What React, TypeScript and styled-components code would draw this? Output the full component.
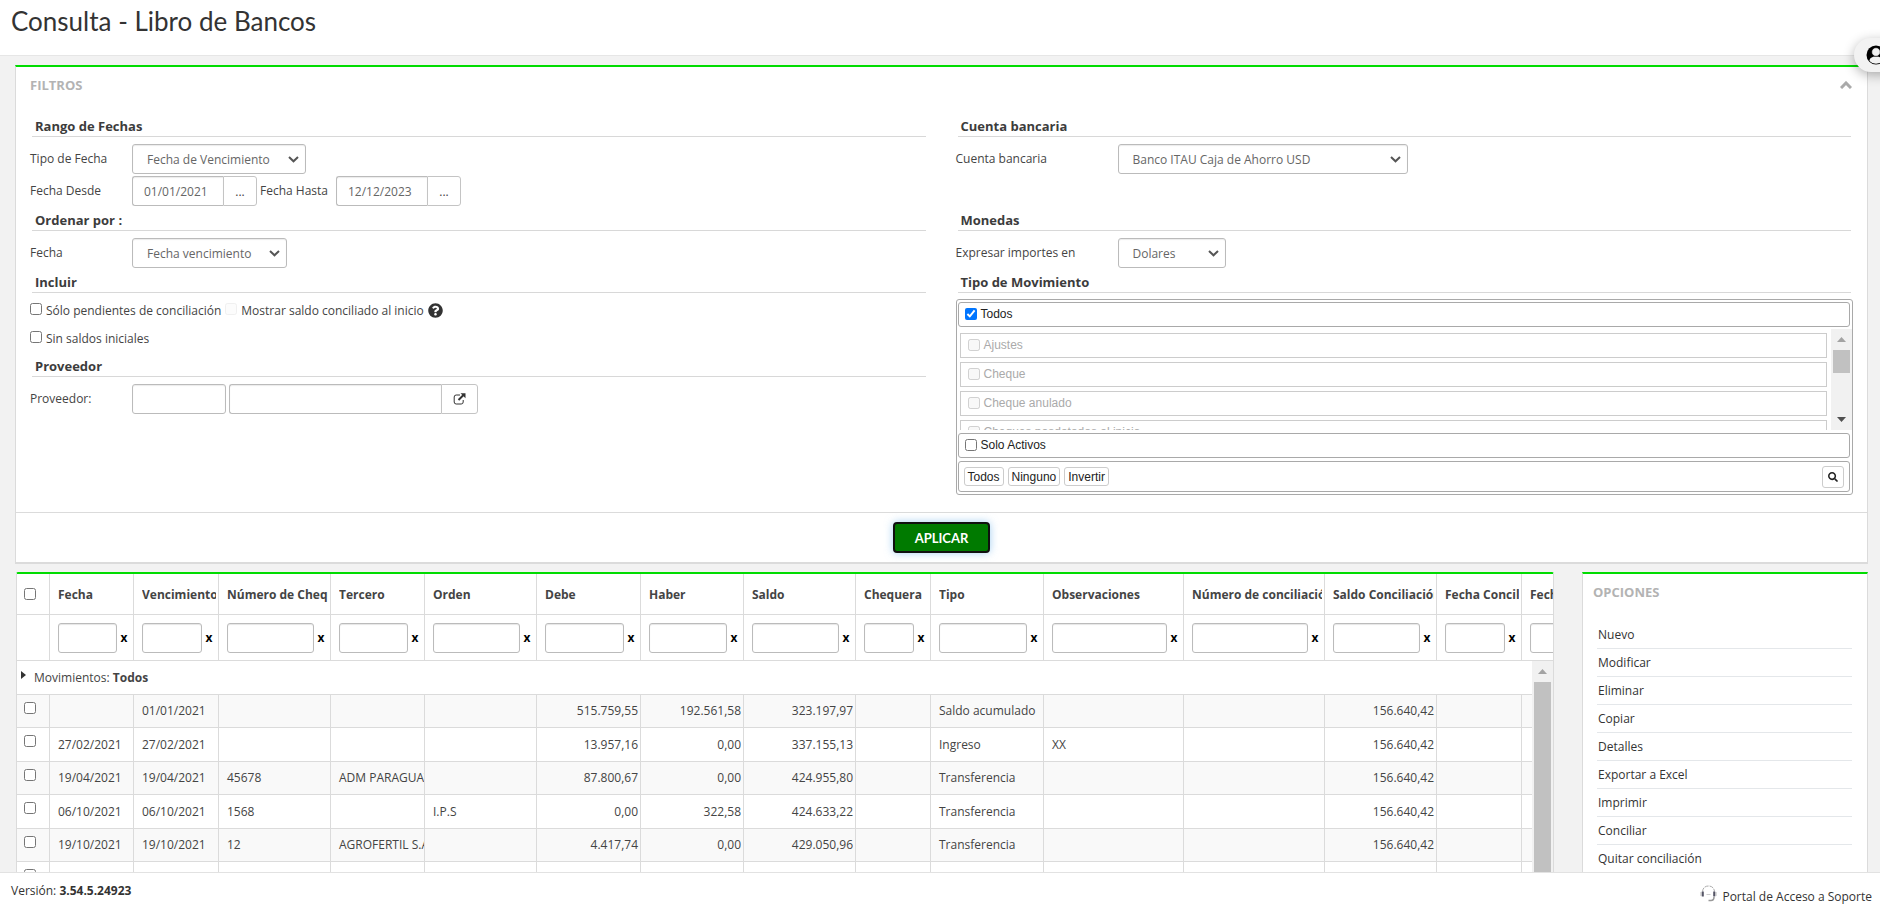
import React from "react";
import styled, { createGlobalStyle, css } from "styled-components";
import { FaQuestionCircle, FaSearch } from "react-icons/fa";

const GlobalStyle = createGlobalStyle`
  *, *::before, *::after { box-sizing: border-box; }
  html, body { margin: 0; padding: 0; }
  body {
    background: #f2f2f2;
    color: #444;
    font-family: "Open Sans", "Liberation Sans", sans-serif;
    font-size: 12px;
    line-height: 20px;
    overflow: hidden;
  }
  button, input, select { font-family: inherit; font-size: 12px; margin: 0; }
`;

const Page = styled.div`
  display: flex;
  flex-direction: column;
  height: 100vh;
`;

const Header = styled.header`
  flex: none;
  height: 56px;
  padding: 4px 11px;
  background: #fff;
  border-bottom: 1px solid #e6e6e6;
`;

const Title = styled.h1`
  margin: 0;
  font-family: Lato, "Open Sans", sans-serif;
  font-size: 26px;
  font-weight: 400;
  line-height: 34px;
  color: #333;
`;

const UserButton = styled.button`
  position: fixed;
  top: 38px;
  right: -34px;
  width: 60px;
  height: 34px;
  padding: 0 12px;
  display: flex;
  align-items: center;
  border: 0;
  border-radius: 17px;
  background: #f2f2f2;
  box-shadow: 0 3px 12px rgba(0, 0, 0, 0.3);
  z-index: 2;
`;

const Main = styled.main`
  flex: 1;
  min-height: 0;
  overflow: auto;
  scrollbar-width: none;
  display: flex;
  flex-direction: column;
  gap: 9px;
  padding: 9px 12px 0 15px;
`;

const Panel = styled.section`
  flex: none;
  background: #fff;
  border: 1px solid #dbdbdb;
  border-top: 2px solid #00dc00;
`;

const FilterPanel = styled(Panel)`
  box-shadow: 0 1px 0 #dbdbdb;
`;

const PanelHead = styled.div`
  display: flex;
  justify-content: space-between;
  align-items: center;
  height: 36px;
  padding: 0 15px 0 14px;
`;

const PanelTitle = styled.h2`
  margin: 0;
  font-size: 13px;
  font-weight: 700;
  line-height: 20px;
  color: #b3b3b3;
`;

const CollapseButton = styled.button`
  display: flex;
  padding: 0;
  border: 0;
  background: none;
`;

const FilterGrid = styled.div`
  display: grid;
  grid-template-columns: 1fr 1fr;
  padding: 14px 0 17px;
`;

const Section = styled.div`
  padding: 0 15px 0 14px;
`;

const SectionTitle = styled.h3`
  margin: 0 1px 6px 2px;
  padding-left: 3px;
  border-bottom: 1px solid #d8d8d8;
  font-size: 13px;
  font-weight: 700;
  line-height: 19px;
  color: #3c3c3c;
`;

const Fields = styled.div<{ $gap?: number; $bottom?: number }>`
  display: flex;
  flex-direction: column;
  gap: ${(p) => p.$gap ?? 2}px;
  padding: 1px 0 ${(p) => p.$bottom ?? 5}px;
`;

const FieldRow = styled.div`
  display: flex;
  align-items: center;
  height: 30px;
`;

const Label = styled.label<{ $width: number }>`
  flex: none;
  width: ${(p) => p.$width}px;
`;

const controlFrame = css`
  height: 30px;
  border: 1px solid #bbb;
  border-radius: 3px;
  background: #fff;
  color: #666;
`;

const SelectFrame = styled.div<{ $width: number }>`
  position: relative;
  width: ${(p) => p.$width}px;

  svg {
    position: absolute;
    top: 12px;
    right: 7px;
    pointer-events: none;
  }
`;

const SelectControl = styled.select`
  ${controlFrame}
  appearance: none;
  display: block;
  width: 100%;
  padding: 0 20px 0 14px;
  box-shadow: inset 0 1px 1px rgba(0, 0, 0, 0.08);
`;

const TextInput = styled.input<{ $width: number; $joined?: boolean }>`
  ${controlFrame}
  width: ${(p) => p.$width}px;
  padding: 0 11px;
  box-shadow: inset 0 1px 1px rgba(0, 0, 0, 0.08);
  ${(p) => p.$joined && "border-top-right-radius: 0; border-bottom-right-radius: 0; border-right: 0;"}
`;

const AddonButton = styled.button<{ $width: number }>`
  display: flex;
  align-items: center;
  justify-content: center;
  width: ${(p) => p.$width}px;
  height: 30px;
  padding: 0;
  border: 1px solid #c4c4c4;
  border-radius: 0 3px 3px 0;
  background: #fff;
  color: #444;
`;

const InputGroup = styled.div`
  display: flex;
  margin-right: 3px;
`;

const CheckRow = styled.div`
  display: flex;
  align-items: center;
  height: 20px;
`;

const Check = styled.input.attrs({ type: "checkbox" })`
  flex: none;
  width: 12px;
  height: 12px;
  margin: 0;
`;

const CheckLabel = styled.label`
  display: flex;
  align-items: flex-start;
  gap: 4px;
  margin-right: 4px;
  padding-top: 1px;

  ${Check} { margin-top: 2px; }
  ${Check}:disabled { opacity: 0.3; }
`;

const MovementBox = styled.div`
  margin-right: -1px;
  padding: 2px 0 2px 1px;
  border: 1px solid #a9a9a9;
  border-radius: 3px;
  font-family: "Liberation Sans", Arial, sans-serif;
  color: #222;
`;

const MovementBar = styled.div<{ $tall?: boolean }>`
  display: flex;
  align-items: center;
  gap: 4px;
  height: ${(p) => (p.$tall ? 31 : 25)}px;
  margin-right: 2px;
  padding: 0 5px 0 ${(p) => (p.$tall ? 5 : 6)}px;
  border: 1px solid #a9a9a9;
  border-radius: 3px;

  & + & { margin-top: 3px; }
`;

const MovementLabel = styled.label`
  display: flex;
  align-items: center;
  gap: 4px;
  padding-bottom: 1px;
`;

const MovementScroll = styled.div`
  display: flex;
  height: 101px;
  margin: 2px 0 3px;
  overflow: hidden;
`;

const MovementItems = styled.ul`
  flex: 1;
  margin: 0;
  padding: 4px 4px 0 2px;
  list-style: none;
`;

const MovementItem = styled.li`
  display: flex;
  align-items: center;
  height: 25px;
  margin-bottom: 4px;
  padding-left: 7px;
  border: 1px solid #ccc;
  color: #aaa;
`;

const SmallButton = styled.button`
  height: 19px;
  padding: 0 3px;
  border: 1px solid #ccc;
  border-radius: 3px;
  background: #fff;
  color: #222;
  line-height: 16px;
`;

const SearchButton = styled(SmallButton)`
  display: flex;
  align-items: center;
  justify-content: center;
  width: 22px;
  height: 22px;
  margin-left: auto;
`;

const ScrollTrack = styled.div`
  display: flex;
  flex-direction: column;
  align-items: center;
  width: 21px;
  background: #f1f1f1;
`;

const ScrollArrow = styled.div`
  display: flex;
  align-items: center;
  justify-content: center;
  height: 21px;
  flex: none;
`;

const ScrollThumb = styled.div<{ $fill?: boolean }>`
  width: 17px;
  background: #c1c1c1;
  ${(p) => (p.$fill ? "flex: 1;" : "height: 23px; margin-bottom: auto;")}
`;

const Actions = styled.div`
  display: flex;
  justify-content: center;
  padding: 9px 0;
  border-top: 1px solid #dbdbdb;
`;

const ApplyButton = styled.button`
  width: 97px;
  height: 31px;
  padding: 0;
  border: 2px solid #101010;
  border-radius: 4px;
  background: #007a00;
  box-shadow: 0 0 8px rgba(102, 175, 233, 0.6);
  color: #fff;
  font-family: Lato, sans-serif;
  font-size: 13px;
  font-weight: 700;
`;

const Results = styled.div`
  flex: none;
  display: flex;
  align-items: flex-start;
  gap: 28px;
`;

const GridPanel = styled(Panel)`
  position: relative;
  flex: 1;
  min-width: 0;
  height: 340px;
  margin-left: 1px;
  border-radius: 2px 2px 0 0;
  overflow: hidden;
`;

const Table = styled.table`
  width: 1590px;
  table-layout: fixed;
  border-collapse: separate;
  border-spacing: 0;

  th, td {
    padding: 0 2px 0 8px;
    border-right: 1px solid #dbdbdb;
    border-bottom: 1px solid #dbdbdb;
    overflow: hidden;
    white-space: nowrap;
    text-align: left;
  }
  th:first-child, tr > td:first-child { padding-left: 7px; }
`;

const HeadCell = styled.th`
  height: 41px;
  font-weight: 700;

  ${Check} { display: block; }
`;

const HeadText = styled.div`
  padding-top: 2px;
  overflow: hidden;
`;

const AmountText = styled.div`
  text-align: right;
`;

const FilterCell = styled.td`
  height: 46px;
`;

const ColumnFilter = styled.div`
  display: flex;
  align-items: center;
  margin-right: -2px;
`;

const FilterInput = styled.input`
  ${controlFrame}
  flex: 1;
  min-width: 0;
  width: 100%;
  box-shadow: inset 0 1px 1px rgba(0, 0, 0, 0.1);
`;

const ClearButton = styled.button`
  flex: none;
  width: 16px;
  height: 30px;
  padding: 0 2px 0 0;
  border: 0;
  background: none;
  color: #000;
  font-weight: 700;
`;

const GroupCell = styled.td`
  height: 34px;
`;

const GroupToggle = styled.button`
  display: flex;
  align-items: center;
  gap: 8px;
  margin-left: -3px;
  padding: 0;
  border: 0;
  background: none;
  color: #444;
  line-height: 20px;

  svg { margin-bottom: 5px; }
`;

const DataRow = styled.tr<{ $shaded: boolean }>`
  height: ${(p) => (p.$shaded ? 33 : 34)}px;
  background: ${(p) => (p.$shaded ? "#f9f9f9" : "#fff")};
`;

const RowCheck = styled(Check)`
  display: block;
  margin-bottom: 7px;
`;

const TableScroll = styled(ScrollTrack)`
  position: absolute;
  top: 87px;
  right: 0;
  bottom: 0;
`;

const OptionsPanel = styled(Panel)`
  width: 286px;
`;

const OptionsHead = styled(PanelHead)`
  padding: 0 10px;
  height: 35px;
`;

const OptionList = styled.ul`
  margin: 0;
  padding: 12px 15px 0 14px;
  list-style: none;
`;

const OptionItem = styled.li`
  height: 28px;
  padding: 4px 1px 3px;
  border-bottom: 1px solid #e4e7ea;
`;

const OptionLink = styled.a`
  display: block;
  color: #333;
  text-decoration: none;
`;

const Footer = styled.footer`
  flex: none;
  display: flex;
  justify-content: space-between;
  height: 38px;
  padding: 8px 8px 3px 11px;
  border-top: 1px solid #e2e2e2;
  background: #fff;
  color: #333;
`;

const SupportLink = styled.a`
  display: flex;
  align-items: flex-end;
  gap: 5px;
  color: #333;
  text-decoration: none;

  svg { margin-bottom: 5px; }
`;

const ArrowIcon = ({ down = false, color = "#a3a3a3" }: { down?: boolean; color?: string }) => (
  <svg width="9" height="5" viewBox="0 0 9 5" fill={color} aria-hidden="true">
    <path d={down ? "M0 0h9L4.500 5z" : "M0 5h9L4.500 0z"} />
  </svg>
);

const OpenIcon = () => (
  <svg width="13" height="12" viewBox="0 0 13 12" fill="none" stroke="#333" aria-hidden="true">
    <path d="M7 2H3.200A2 2 0 0 0 1.200 4v5a2 2 0 0 0 2 2h5a2 2 0 0 0 2-2V7" />
    <path d="M5.500 7l5-5" strokeWidth="2" />
    <path d="M7.500.300h5v5z" fill="#333" stroke="none" />
  </svg>
);

const HeadsetIcon = () => (
  <svg width="17" height="17" viewBox="0 0 17 17" fill="none" stroke="#aaa" aria-hidden="true">
    <path d="M2.500 6.500C3 2.500 5.500 1 8.500 1s5.500 1.500 6 5.500" strokeDasharray="4 1" />
    <path d="M1 7v4M16 7v4" stroke="#bbb" />
    <path d="M2.800 6.500v5M14.200 6.500v5" stroke="#556" strokeWidth="2" />
    <path d="M14 12c0 2.500-1.500 3.500-3 3.500H8.500" stroke="#999" strokeWidth="1.500" />
    <path d="M6.500 9.500h4" stroke="#ccc" />
  </svg>
);

const columns: { name: string; width: number; right?: boolean }[] = [
  { name: "Fecha", width: 84 },
  { name: "Vencimiento", width: 85 },
  { name: "Número de Cheque", width: 112 },
  { name: "Tercero", width: 94 },
  { name: "Orden", width: 112 },
  { name: "Debe", width: 104, right: true },
  { name: "Haber", width: 103, right: true },
  { name: "Saldo", width: 112, right: true },
  { name: "Chequera", width: 75 },
  { name: "Tipo", width: 113 },
  { name: "Observaciones", width: 140 },
  { name: "Número de conciliación", width: 141 },
  { name: "Saldo Conciliación", width: 112, right: true },
  { name: "Fecha Conciliación", width: 85 },
  { name: "Fecha", width: 85 },
];

const rows: string[][] = [
  ["", "01/01/2021", "", "", "", "515.759,55", "192.561,58", "323.197,97", "", "Saldo acumulado", "", "", "156.640,42", "", ""],
  ["27/02/2021", "27/02/2021", "", "", "", "13.957,16", "0,00", "337.155,13", "", "Ingreso", "XX", "", "156.640,42", "", ""],
  ["19/04/2021", "19/04/2021", "45678", "ADM PARAGUAY", "", "87.800,67", "0,00", "424.955,80", "", "Transferencia", "", "", "156.640,42", "", ""],
  ["06/10/2021", "06/10/2021", "1568", "", "I.P.S", "0,00", "322,58", "424.633,22", "", "Transferencia", "", "", "156.640,42", "", ""],
  ["19/10/2021", "19/10/2021", "12", "AGROFERTIL S.A.", "", "4.417,74", "0,00", "429.050,96", "", "Transferencia", "", "", "156.640,42", "", ""],
  ["", "", "", "", "", "", "", "", "", "", "", "", "", "", ""],
];

const movementTypes = ["Ajustes", "Cheque", "Cheque anulado", "Cheques posdatados al inicio"];

const options = [
  "Nuevo",
  "Modificar",
  "Eliminar",
  "Copiar",
  "Detalles",
  "Exportar a Excel",
  "Imprimir",
  "Conciliar",
  "Quitar conciliación",
];

function Select({ id, width, value }: { id: string; width: number; value: string }) {
  return (
    <SelectFrame $width={width}>
      <SelectControl id={id}><option>{value}</option></SelectControl>
      <svg width="11" height="7" viewBox="0 0 11 7" fill="none" stroke="#555" strokeWidth="2" aria-hidden="true">
        <path d="M1 1l4.500 4.300L10 1" />
      </svg>
    </SelectFrame>
  );
}

function MovementPicker() {
  return (
    <MovementBox>
      <MovementBar>
        <MovementLabel>
          <Check defaultChecked />
          Todos
        </MovementLabel>
      </MovementBar>
      <MovementScroll>
        <MovementItems>
          {movementTypes.map((name) => (
            <MovementItem key={name}>
              <MovementLabel>
                <Check disabled />
                {name}
              </MovementLabel>
            </MovementItem>
          ))}
        </MovementItems>
        <ScrollTrack>
          <ScrollArrow><ArrowIcon /></ScrollArrow>
          <ScrollThumb />
          <ScrollArrow><ArrowIcon down color="#505050" /></ScrollArrow>
        </ScrollTrack>
      </MovementScroll>
      <MovementBar>
        <MovementLabel>
          <Check />
          Solo Activos
        </MovementLabel>
      </MovementBar>
      <MovementBar $tall>
        <SmallButton>Todos</SmallButton>
        <SmallButton>Ninguno</SmallButton>
        <SmallButton>Invertir</SmallButton>
        <SearchButton aria-label="Buscar"><FaSearch size={10} /></SearchButton>
      </MovementBar>
    </MovementBox>
  );
}

function ResultsTable() {
  return (
    <GridPanel>
      <Table>
        <colgroup>
          <col width={33} />
          {columns.map((c, i) => <col key={i} width={c.width} />)}
        </colgroup>
        <thead>
          <tr>
            <HeadCell><Check aria-label="Seleccionar todos" /></HeadCell>
            {columns.map((c, i) => (
              <HeadCell key={i} scope="col"><HeadText>{c.name}</HeadText></HeadCell>
            ))}
          </tr>
          <tr>
            <FilterCell />
            {columns.map((c, i) => (
              <FilterCell key={i}>
                <ColumnFilter>
                  <FilterInput aria-label={`Filtrar ${c.name}`} />
                  <ClearButton>x</ClearButton>
                </ColumnFilter>
              </FilterCell>
            ))}
          </tr>
        </thead>
        <tbody>
          <tr>
            <GroupCell colSpan={16}>
              <GroupToggle>
                <svg width="5" height="8" viewBox="0 0 5 8" aria-hidden="true"><path d="M0 0l5 4-5 4z" fill="#333" /></svg>
                <span>Movimientos: <b>Todos</b></span>
              </GroupToggle>
            </GroupCell>
          </tr>
          {rows.map((row, r) => (
            <DataRow key={r} $shaded={r % 2 === 0}>
              <td><RowCheck aria-label={`Seleccionar fila ${r + 1}`} /></td>
              {row.map((value, c) => (
                <td key={c}>{columns[c].right ? <AmountText>{value}</AmountText> : value}</td>
              ))}
            </DataRow>
          ))}
        </tbody>
      </Table>
      <TableScroll>
        <ScrollArrow><ArrowIcon /></ScrollArrow>
        <ScrollThumb $fill />
      </TableScroll>
    </GridPanel>
  );
}

export default function App() {
  return (
    <Page>
      <GlobalStyle />
      <Header><Title>Consulta - Libro de Bancos</Title></Header>
      <UserButton aria-label="Usuario">
        <svg width="20" height="20" viewBox="0 0 20 20" aria-hidden="true">
          <circle cx="10" cy="10" r="9.500" fill="#000" />
          <path d="M3.500 16c0-3 2.500-4.500 6.500-4.500s6.500 1.500 6.500 4.500A9 9 0 0 1 10 18.800 9 9 0 0 1 3.500 16z" fill="#f2f2f2" />
          <circle cx="10" cy="7" r="4.300" fill="#f2f2f2" stroke="#000" strokeWidth=".6" />
        </svg>
      </UserButton>
      <Main>
        <FilterPanel>
          <PanelHead>
            <PanelTitle>FILTROS</PanelTitle>
            <CollapseButton aria-label="Contraer filtros">
              <svg width="12" height="8" viewBox="0 0 12 8" fill="none" stroke="#aaa" strokeWidth="3" aria-hidden="true">
                <path d="M1 7l5-5 5 5" />
              </svg>
            </CollapseButton>
          </PanelHead>
          <FilterGrid>
            <Section>
              <SectionTitle>Rango de Fechas</SectionTitle>
              <Fields>
                <FieldRow>
                  <Label htmlFor="tipo-fecha" $width={102}>Tipo de Fecha</Label>
                  <Select id="tipo-fecha" width={174} value="Fecha de Vencimiento" />
                </FieldRow>
                <FieldRow>
                  <Label htmlFor="desde" $width={102}>Fecha Desde</Label>
                  <InputGroup>
                    <TextInput id="desde" $width={91} $joined defaultValue="01/01/2021" />
                    <AddonButton $width={34} aria-label="Elegir fecha desde">...</AddonButton>
                  </InputGroup>
                  <Label htmlFor="hasta" $width={76}>Fecha Hasta</Label>
                  <InputGroup>
                    <TextInput id="hasta" $width={91} $joined defaultValue="12/12/2023" />
                    <AddonButton $width={34} aria-label="Elegir fecha hasta">...</AddonButton>
                  </InputGroup>
                </FieldRow>
              </Fields>
            </Section>
            <Section>
              <SectionTitle>Cuenta bancaria</SectionTitle>
              <Fields>
                <FieldRow>
                  <Label htmlFor="cuenta" $width={162}>Cuenta bancaria</Label>
                  <Select id="cuenta" width={290} value="Banco ITAU Caja de Ahorro USD" />
                </FieldRow>
              </Fields>
            </Section>
            <Section>
              <SectionTitle>Ordenar por :</SectionTitle>
              <Fields>
                <FieldRow>
                  <Label htmlFor="orden" $width={102}>Fecha</Label>
                  <Select id="orden" width={155} value="Fecha vencimiento" />
                </FieldRow>
              </Fields>
            </Section>
            <Section>
              <SectionTitle>Monedas</SectionTitle>
              <Fields>
                <FieldRow>
                  <Label htmlFor="moneda" $width={162}>Expresar importes en</Label>
                  <Select id="moneda" width={108} value="Dolares" />
                </FieldRow>
              </Fields>
            </Section>
            <Section>
              <SectionTitle>Incluir</SectionTitle>
              <Fields $gap={8} $bottom={9}>
                <CheckRow>
                  <CheckLabel>
                    <Check />
                    Sólo pendientes de conciliación
                  </CheckLabel>
                  <CheckLabel>
                    <Check disabled />
                    Mostrar saldo conciliado al inicio
                  </CheckLabel>
                  <FaQuestionCircle size={15} color="#333" aria-label="Ayuda" />
                </CheckRow>
                <CheckRow>
                  <CheckLabel>
                    <Check />
                    Sin saldos iniciales
                  </CheckLabel>
                </CheckRow>
              </Fields>
              <SectionTitle>Proveedor</SectionTitle>
              <Fields>
                <FieldRow>
                  <Label htmlFor="proveedor" $width={102}>Proveedor:</Label>
                  <InputGroup>
                    <TextInput id="proveedor" $width={94} />
                  </InputGroup>
                  <InputGroup>
                    <TextInput aria-label="Nombre del proveedor" $width={212} $joined />
                    <AddonButton $width={37} aria-label="Buscar proveedor"><OpenIcon /></AddonButton>
                  </InputGroup>
                </FieldRow>
              </Fields>
            </Section>
            <Section>
              <SectionTitle>Tipo de Movimiento</SectionTitle>
              <MovementPicker />
            </Section>
          </FilterGrid>
          <Actions><ApplyButton>APLICAR</ApplyButton></Actions>
        </FilterPanel>
        <Results>
          <ResultsTable />
          <OptionsPanel>
            <OptionsHead><PanelTitle>OPCIONES</PanelTitle></OptionsHead>
            <OptionList>
              {options.map((name) => (
                <OptionItem key={name}><OptionLink href="#">{name}</OptionLink></OptionItem>
              ))}
            </OptionList>
          </OptionsPanel>
        </Results>
      </Main>
      <Footer>
        <span>Versión: <b>3.54.5.24923</b></span>
        <SupportLink href="#"><HeadsetIcon />Portal de Acceso a Soporte</SupportLink>
      </Footer>
    </Page>
  );
}
